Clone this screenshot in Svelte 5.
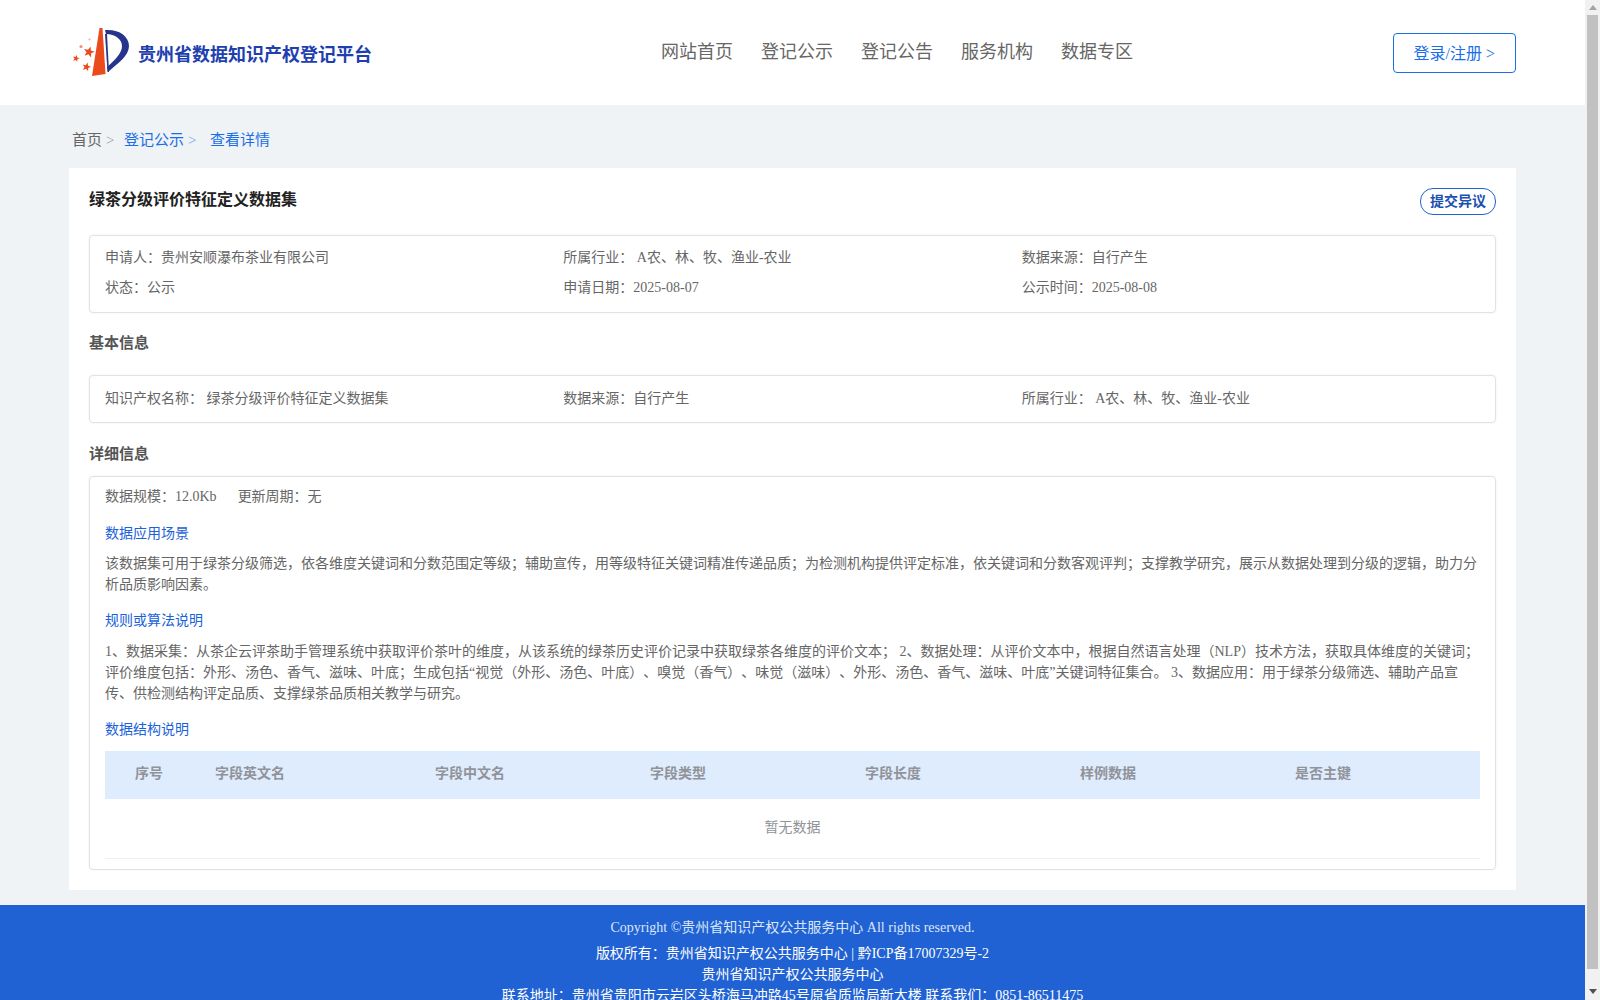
<script>
	const navItems = ['网站首页', '登记公示', '登记公告', '服务机构', '数据专区'];

	const summary = [
		{ label: '申请人：', value: '贵州安顺瀑布茶业有限公司' },
		{ label: '所属行业：', value: ' A农、林、牧、渔业-农业' },
		{ label: '数据来源：', value: '自行产生' },
		{ label: '状态：', value: '公示' },
		{ label: '申请日期：', value: '2025-08-07' },
		{ label: '公示时间：', value: '2025-08-08' }
	];

	const basic = [
		{ label: '知识产权名称：', value: ' 绿茶分级评价特征定义数据集' },
		{ label: '数据来源：', value: '自行产生' },
		{ label: '所属行业：', value: ' A农、林、牧、渔业-农业' }
	];

	const columns = ['序号', '字段英文名', '字段中文名', '字段类型', '字段长度', '样例数据', '是否主键'];

	// five-point star for the logo
	function star(cx, cy, r) {
		const pts = [];
		for (let i = 0; i < 10; i++) {
			const radius = i % 2 === 0 ? r : r * 0.42;
			const angle = -Math.PI / 2 + (i * Math.PI) / 5 + 0.25;
			pts.push(`${(cx + radius * Math.cos(angle)).toFixed(2)},${(cy + radius * Math.sin(angle)).toFixed(2)}`);
		}
		return pts.join(' ');
	}
</script>

<div class="page">
	<header class="header">
		<div class="brand">
			<svg class="logo" width="58" height="54" viewBox="0 0 58 54" aria-hidden="true">
				<polygon points="27.5,3 30.5,3 33.5,49 20,51" fill="#ea4a1c" />
				<path d="M33 5 C47 4 57 11 57 21 C57 31 46 38 36 47 L35 42 C43 35 50 28 50 21 C50 14 43 9 34 9 Z" fill="#27348b" />
				<polygon points="33,9 35,9 37,47 35.5,47" fill="#27348b" />
				<polygon points={star(17, 27, 5.8)} fill="#ea4a1c" />
				<polygon points={star(4, 33.5, 3.6)} fill="#ea4a1c" />
				<polygon points={star(14.5, 42, 4.6)} fill="#ea4a1c" />
				<circle cx="9" cy="21.5" r="1.6" fill="#f2916f" />
				<circle cx="17.5" cy="14.5" r="1.1" fill="#f5b49c" />
			</svg>
			<span class="brand-name">贵州省数据知识产权登记平台</span>
		</div>
		<nav class="nav">
			{#each navItems as item}
				<span class="nav-item">{item}</span>
			{/each}
		</nav>
		<button class="login">登录/注册 &gt;</button>
	</header>

	<main class="main">
		<div class="crumbs">
			<span class="crumb">首页<i>&gt;</i></span>
			<span class="crumb link">登记公示<i>&gt;</i></span>
			<span class="crumb link">查看详情</span>
		</div>

		<section class="card">
			<div class="card-head">
				<h1>绿茶分级评价特征定义数据集</h1>
				<button class="objection">提交异议</button>
			</div>

			<div class="box grid">
				{#each summary as row}
					<div class="cell">{row.label}{row.value}</div>
				{/each}
			</div>

			<h2 class="basic-title">基本信息</h2>
			<div class="box grid basic-box">
				{#each basic as row}
					<div class="cell">{row.label}{row.value}</div>
				{/each}
			</div>

			<h2 class="detail-title">详细信息</h2>
			<div class="box detail">
				<div class="meta">
					<span>数据规模：12.0Kb</span>
					<span>更新周期：无</span>
				</div>

				<h3>数据应用场景</h3>
				<p>该数据集可用于绿茶分级筛选，依各维度关键词和分数范围定等级；辅助宣传，用等级特征关键词精准传递品质；为检测机构提供评定标准，依关键词和分数客观评判；支撑教学研究，展示从数据处理到分级的逻辑，助力分析品质影响因素。</p>

				<h3 class="rule-title">规则或算法说明</h3>
				<p>1、数据采集：从茶企云评茶助手管理系统中获取评价茶叶的维度，从该系统的绿茶历史评价记录中获取绿茶各维度的评价文本； 2、数据处理：从评价文本中，根据自然语言处理（NLP）技术方法，获取具体维度的关键词；评价维度包括：外形、汤色、香气、滋味、叶底；生成包括“视觉（外形、汤色、叶底）、嗅觉（香气）、味觉（滋味）、外形、汤色、香气、滋味、叶底”关键词特征集合。 3、数据应用：用于绿茶分级筛选、辅助产品宣传、供检测结构评定品质、支撑绿茶品质相关教学与研究。</p>

				<h3>数据结构说明</h3>
				<div class="table-head">
					{#each columns as col}
						<div class="th">{col}</div>
					{/each}
				</div>
				<div class="table-empty">暂无数据</div>
			</div>
		</section>
	</main>

	<footer class="footer">
		<div class="copyright">Copyright ©贵州省知识产权公共服务中心 All rights reserved.</div>
		<div>版权所有：贵州省知识产权公共服务中心 | 黔ICP备17007329号-2</div>
		<div>贵州省知识产权公共服务中心</div>
		<div>联系地址：贵州省贵阳市云岩区头桥海马冲路45号原省质监局新大楼 联系我们：0851-86511475</div>
	</footer>
</div>

<!-- the browser's own scrollbar is hidden in this window, so it is drawn over the page edge -->
<div class="scrollbar" aria-hidden="true">
	<div class="arrow up"></div>
	<div class="thumb"></div>
	<div class="arrow down"></div>
</div>

<style>
	:global(body) {
		margin: 0;
		background: #eff3f6;
		font-family: "Liberation Serif", "Noto Sans CJK SC", serif;
		font-size: 14px;
		color: #666;
		text-spacing-trim: space-all;
	}

	.page {
		display: flex;
		flex-direction: column;
		margin-right: 15px;
	}

	.scrollbar {
		position: fixed;
		top: 0;
		right: 0;
		bottom: 0;
		width: 15px;
		display: flex;
		flex-direction: column;
		align-items: center;
		background: #f1f1f1;
	}

	.arrow {
		width: 0;
		height: 0;
		border-left: 4.5px solid transparent;
		border-right: 4.5px solid transparent;
	}

	.arrow.up {
		margin-top: 5px;
		margin-bottom: 5px;
		border-bottom: 5px solid #a3a3a3;
	}

	.arrow.down {
		margin-top: 20px;
		border-top: 5px solid #505050;
	}

	.thumb {
		width: 11px;
		height: 954px;
		background: #c1c1c1;
	}

	.header {
		display: flex;
		align-items: center;
		height: 105px;
		padding: 0 69px 0 72px;
		background: #fff;
	}

	.brand {
		display: flex;
		align-items: center;
		width: 300px;
		flex-shrink: 0;
	}

	.logo {
		display: block;
		margin-top: -1px;
	}

	.brand-name {
		margin-left: 8px;
		font-size: 18px;
		font-weight: 700;
		color: #1e40af;
		white-space: nowrap;
	}

	.nav {
		display: flex;
		gap: 28px;
		margin-left: 289px;
		margin-top: -5px;
	}

	.nav-item {
		font-size: 18px;
		color: #666;
	}

	.login {
		height: 40px;
		margin-left: auto;
		margin-top: 1px;
		padding: 0 20px 3px;
		border: 1px solid #1a6ee8;
		border-radius: 4px;
		background: #fff;
		font-family: inherit;
		font-size: 16px;
		color: #1a6ee8;
	}

	.main {
		padding: 0 69px 15px;
	}

	.crumbs {
		display: flex;
		height: 63px;
		padding-left: 3px;
		box-sizing: border-box;
		padding-top: 25px;
		font-size: 15px;
		line-height: 21px;
	}

	.crumb {
		margin-right: 9.5px;
	}

	.crumb i {
		margin-left: 4px;
		font-style: normal;
		opacity: 0.6;
	}

	.crumb.link {
		color: #1a6ee8;
		margin-right: 13.5px;
	}

	.card {
		padding: 20px;
		background: #fff;
	}

	.card-head {
		display: flex;
		justify-content: space-between;
		align-items: flex-start;
		margin-bottom: 20px;
	}

	h1 {
		margin: 0;
		font-size: 16px;
		line-height: 24px;
		font-weight: 700;
		color: #222;
	}

	.objection {
		height: 27px;
		padding: 0 9px 3px;
		border: 1px solid #1f62d0;
		border-radius: 13px;
		background: #fff;
		font-family: inherit;
		font-size: 14px;
		font-weight: 700;
		color: #1a50b0;
	}

	h2 {
		margin: 0;
		font-size: 15px;
		line-height: 22px;
		font-weight: 700;
		color: #555;
	}

	.basic-title {
		margin: 19px 0 21px;
	}

	.detail-title {
		margin: 20px 0 11px;
	}

	.box {
		border: 1px solid #e2e2e2;
		border-radius: 4px;
		box-shadow: 0 0 2px rgba(0, 0, 0, 0.08);
	}

	.grid {
		display: grid;
		grid-template-columns: repeat(3, 1fr);
		padding: 7px 15px 9px;
	}

	.basic-box {
		padding: 8px 15px;
	}

	.cell {
		line-height: 30px;
		white-space: pre-wrap;
	}

	.detail {
		padding: 9px 15px 10px;
		line-height: 21px;
	}

	.meta {
		display: flex;
		gap: 21px;
		margin-bottom: 16px;
	}

	h3 {
		margin: 15px 0 9px;
		font-size: 14px;
		line-height: 21px;
		font-weight: 400;
		color: #1a62d8;
	}

	h3.rule-title {
		margin-bottom: 10px;
	}

	p {
		margin: 0;
	}

	.table-head {
		display: grid;
		grid-template-columns: 110px 220px repeat(4, 215px) 1fr;
		align-items: center;
		height: 48px;
		box-sizing: border-box;
		padding-bottom: 3px;
		margin-top: 11px;
		background: #dfecfd;
	}

	.th {
		font-weight: 700;
		color: #909399;
	}

	.th:first-child {
		padding-left: 30px;
	}

	.table-empty {
		height: 59px;
		line-height: 58px;
		text-align: center;
		color: #909399;
		border-bottom: 1px solid #ebeef5;
	}

	.footer {
		height: 112px;
		box-sizing: border-box;
		padding-top: 12px;
		background: #2062d3;
		color: #fff;
		text-align: center;
		line-height: 21px;
	}

	.copyright {
		margin-bottom: 5px;
		color: #dbe6fa;
	}
</style>
